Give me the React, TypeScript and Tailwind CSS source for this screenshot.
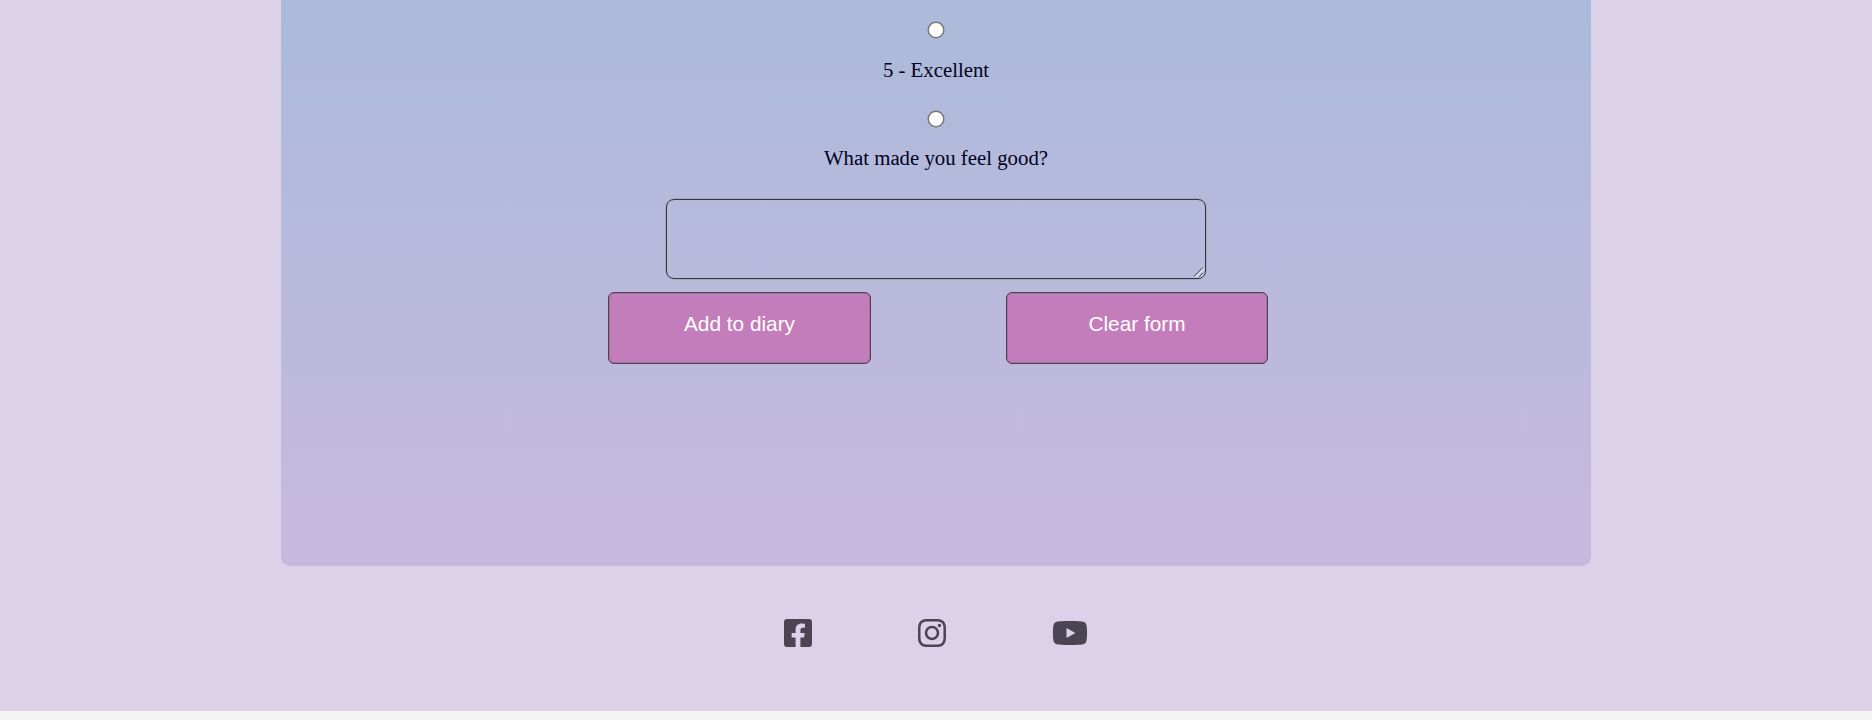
import { FaFacebookSquare, FaInstagram, FaYoutube } from "react-icons/fa";

const radio =
  "m-0 block size-4 shrink-0 appearance-none rounded-full border border-[#767676] bg-white shadow-[0_0_0_0.5px_#767676] checked:border-4";
const button =
  "h-[72px] rounded-[6px] border border-[#48444c] bg-[#c47dbb] pb-[8px] text-center font-['Liberation_Sans',Arial,sans-serif] text-[20.8px] leading-6 text-white shadow-[inset_0_0_0_1px_rgba(60,55,65,0.2)]";

export default function App() {
  return (
    <div className="flex h-[720px] flex-col overflow-hidden bg-[#f3f3f3] font-['Liberation_Serif','Times_New_Roman',serif]">
      <main className="flex h-[711px] flex-col items-center bg-[#dbd1e8]">
        <form
          className="flex h-[566px] w-[1310px] shrink-0 flex-col items-center rounded-b-[9px] bg-linear-to-b from-[#abbada] to-[#c7b9de] pt-[22px] text-[20.8px] leading-6 text-[#02021f]"
          onSubmit={(e) => e.preventDefault()}
        >
          <input type="radio" name="mood" aria-label="4" className={radio} />
          <label htmlFor="excellent" className="mt-5">5 - Excellent</label>
          <div className="mt-[29px]">
            <input id="excellent" type="radio" name="mood" className={radio} />
          </div>
          <label htmlFor="reason" className="mt-[19px]">What made you feel good?</label>
          <div className="relative mt-[29px] h-20 w-[540px] shrink-0">
            <textarea
              id="reason"
              className="block size-full resize-none rounded-[8px] border border-[#38353c] bg-transparent p-2 shadow-[0_0_0_1px_rgba(61,58,66,0.15)]"
            />
            <svg className="pointer-events-none absolute right-px bottom-px" width="13" height="13" viewBox="0 0 13 13" fill="none">
              <path d="M3.5 12 12 3.5M8.5 11.5 11.5 8.5" stroke="#eeeef6" strokeWidth="1.3" />
              <path d="M2 11.5 11 2.5M7.5 11.5 11 8" stroke="#3d3a42" strokeWidth="1" />
            </svg>
          </div>
          <div className="mt-[13px] ml-1 flex w-[660px] justify-between">
            <button type="submit" className={`w-[263px] ${button}`}>Add to diary</button>
            <button type="reset" className={`w-[262px] ${button}`}>Clear form</button>
          </div>
        </form>
        <footer className="mt-[51px] flex items-center gap-[106px] text-[#4b4453]">
          <FaFacebookSquare className="h-8 w-7" />
          <FaInstagram className="h-8 w-7" />
          <FaYoutube className="h-8 w-9" />
        </footer>
      </main>
    </div>
  );
}
